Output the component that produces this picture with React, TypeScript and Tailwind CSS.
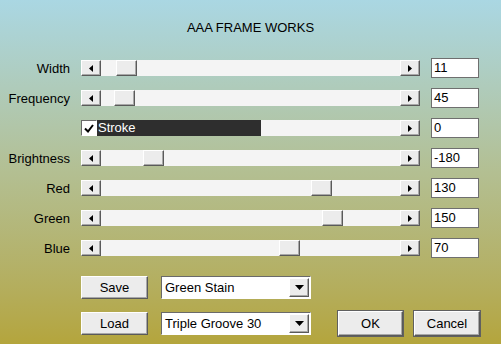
import React from "react";

type Row = { label: string; thumb: number; value: string };

const rows: Row[] = [
  { label: "Width", thumb: 15, value: "11" },
  { label: "Frequency", thumb: 13, value: "45" },
  { label: "Brightness", thumb: 42, value: "-180" },
  { label: "Red", thumb: 210, value: "130" },
  { label: "Green", thumb: 221, value: "150" },
  { label: "Blue", thumb: 178, value: "70" },
];

const raised =
  "border border-t-white border-l-white border-r-[#5a5a5a] border-b-[#5a5a5a] shadow-[inset_-1px_-1px_0_#a8a8a8] bg-[#ececec]";

function Arrow({ dir }: { dir: "left" | "right" | "down" }) {
  if (dir === "down")
    return (
      <svg width="9" height="5" viewBox="0 0 9 5">
        <path d="M0 0h9L4.5 5z" fill="#000" />
      </svg>
    );
  return (
    <svg width="4" height="7" viewBox="0 0 4 7">
      <path d={dir === "left" ? "M4 0v7L0 3.5z" : "M0 0v7l4-3.5z"} fill="#000" />
    </svg>
  );
}

function ArrowBtn({ dir }: { dir: "left" | "right" }) {
  return (
    <div className={`w-[20px] h-[16px] flex items-center justify-center ${raised}`}>
      <Arrow dir={dir} />
    </div>
  );
}

function Track({ thumb }: { thumb: number }) {
  return (
    <div className="relative flex-1 h-[16px] bg-[#f4f4f4]">
      <div className={`absolute top-0 w-[21px] h-[16px] ${raised}`} style={{ left: thumb }} />
    </div>
  );
}

function NumBox({ value }: { value: string }) {
  return (
    <div className="w-[48px] h-[20px] bg-white border border-[#6f6f6f] pl-[2px] text-[13px] leading-[18px]">
      {value}
    </div>
  );
}

function SliderRow({ label, children, value }: { label: string; children: React.ReactNode; value: string }) {
  return (
    <div className="flex items-center h-[20px]">
      <div className="w-[70px] text-right text-[13px] leading-[15px]">{label}</div>
      <div className="ml-[11px] w-[339px] flex items-center">{children}</div>
      <div className="ml-[11px]">
        <NumBox value={value} />
      </div>
    </div>
  );
}

function Combo({ text }: { text: string }) {
  return (
    <div className="w-[150px] h-[23px] bg-white border border-t-[#6a6a6a] border-l-[#6a6a6a] border-r-white border-b-white flex items-center">
      <span className="flex-1 pl-[3px] text-[13px] leading-[15px]">{text}</span>
      <div className={`w-[20px] h-[19px] mr-[1px] flex items-center justify-center ${raised}`}>
        <Arrow dir="down" />
      </div>
    </div>
  );
}

function Button({ label, w, h }: { label: string; w: string; h: string }) {
  return (
    <div className={`${w} ${h} flex items-center justify-center text-[13px] leading-[15px] ${raised}`}>
      {label}
    </div>
  );
}

export default function App() {
  const [first, second, ...rest] = rows;
  return (
    <div
      className="w-[501px] h-[344px] overflow-hidden text-black bg-gradient-to-b from-[#aad7e3] via-[#b3bf92] to-[#b4a53c] flex flex-col"
      style={{ fontFamily: '"Liberation Sans", Arial, sans-serif' }}
    >
      <div className="pt-[20px] text-center text-[13px] leading-[15px]">AAA FRAME WORKS</div>

      <div className="mt-[23px] flex flex-col gap-[10px]">
        {[first, second].map((r) => (
          <SliderRow key={r.label} label={r.label} value={r.value}>
            <ArrowBtn dir="left" />
            <Track thumb={r.thumb} />
            <ArrowBtn dir="right" />
          </SliderRow>
        ))}

        <SliderRow label="" value="0">
          <div className="w-[16px] h-[16px] bg-white border border-t-[#6a6a6a] border-l-[#6a6a6a] border-r-white border-b-white flex items-center justify-center">
            <svg width="10" height="9" viewBox="0 0 10 9">
              <path d="M1 4.5l3 3L9 1" stroke="#000" strokeWidth="2" fill="none" />
            </svg>
          </div>
          <div className="w-[164px] h-[16px] bg-[#2e2e2e] text-white text-[13px] leading-[16px] pl-[1px]">Stroke</div>
          <div className="flex-1 h-[16px] bg-[#f4f4f4]" />
          <ArrowBtn dir="right" />
        </SliderRow>

        {rest.map((r) => (
          <SliderRow key={r.label} label={r.label} value={r.value}>
            <ArrowBtn dir="left" />
            <Track thumb={r.thumb} />
            <ArrowBtn dir="right" />
          </SliderRow>
        ))}
      </div>

      <div className="mt-[18px] pl-[81px] flex items-center gap-[13px]">
        <Button label="Save" w="w-[67px]" h="h-[23px]" />
        <Combo text="Green Stain" />
      </div>

      <div className="mt-[11px] pl-[81px] flex items-center">
        <Button label="Load" w="w-[67px]" h="h-[23px]" />
        <div className="ml-[13px]">
          <Combo text="Triple Groove 30" />
        </div>
        <div className="ml-[26px] border border-[#606060]">
          <Button label="OK" w="w-[65px]" h="h-[25px]" />
        </div>
        <div className="ml-[9px] border border-[#606060]">
          <Button label="Cancel" w="w-[66px]" h="h-[25px]" />
        </div>
      </div>
    </div>
  );
}
